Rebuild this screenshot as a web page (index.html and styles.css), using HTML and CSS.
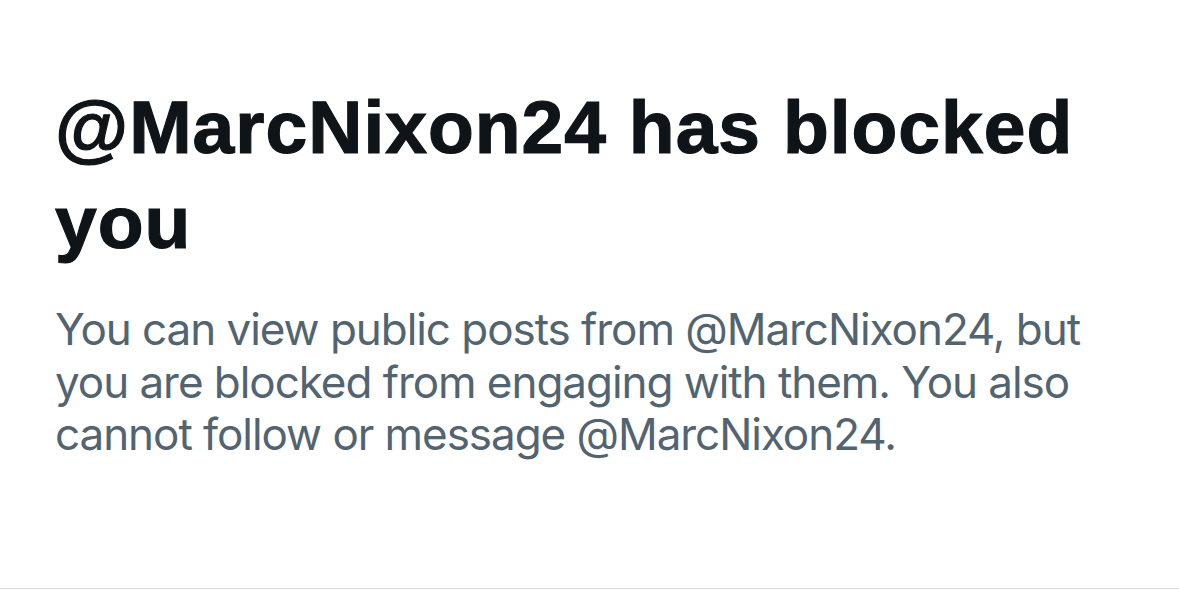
FILE: index.html
```html
<!DOCTYPE html>
<html>
<head>
<meta charset="utf-8">
<link rel="stylesheet" href="styles.css">
</head>
<body>
<main class="page">
  <section class="notice">
    <h1 class="title">@MarcNixon24 has blocked you</h1>
    <p class="desc">You can view public posts from @MarcNixon24, but you are blocked from engaging with them. You also cannot follow or message @MarcNixon24.</p>
  </section>
  <div class="divider"></div>
</main>
</body>
</html>
```
FILE: styles.css
```css
html, body {
  margin: 0;
  padding: 0;
  background: #ffffff;
}
.page {
  display: flex;
  flex-direction: column;
  height: 600px;
}
.notice {
  padding: 80px 60px 0 55px;
  height: 588px;
  box-sizing: border-box;
  flex: none;
}
.title {
  margin: 0;
  font-family: "Liberation Sans", Arial, sans-serif;
  font-weight: 700;
  font-size: 75px;
  line-height: 95px;
  letter-spacing: 1px;
  color: #0f1419;
  -webkit-text-stroke: 1.2px #0f1419;
  max-width: 1064px;
}
.desc {
  margin: 33px 0 0 0;
  font-family: Inter, "Noto Sans", sans-serif;
  font-weight: 400;
  font-size: 44px;
  line-height: 52.5px;
  letter-spacing: -1.05px;
  color: #536471;
  max-width: 1064px;
}
.divider {
  height: 1px;
  background: #cfd9de;
  flex: none;
}
```
